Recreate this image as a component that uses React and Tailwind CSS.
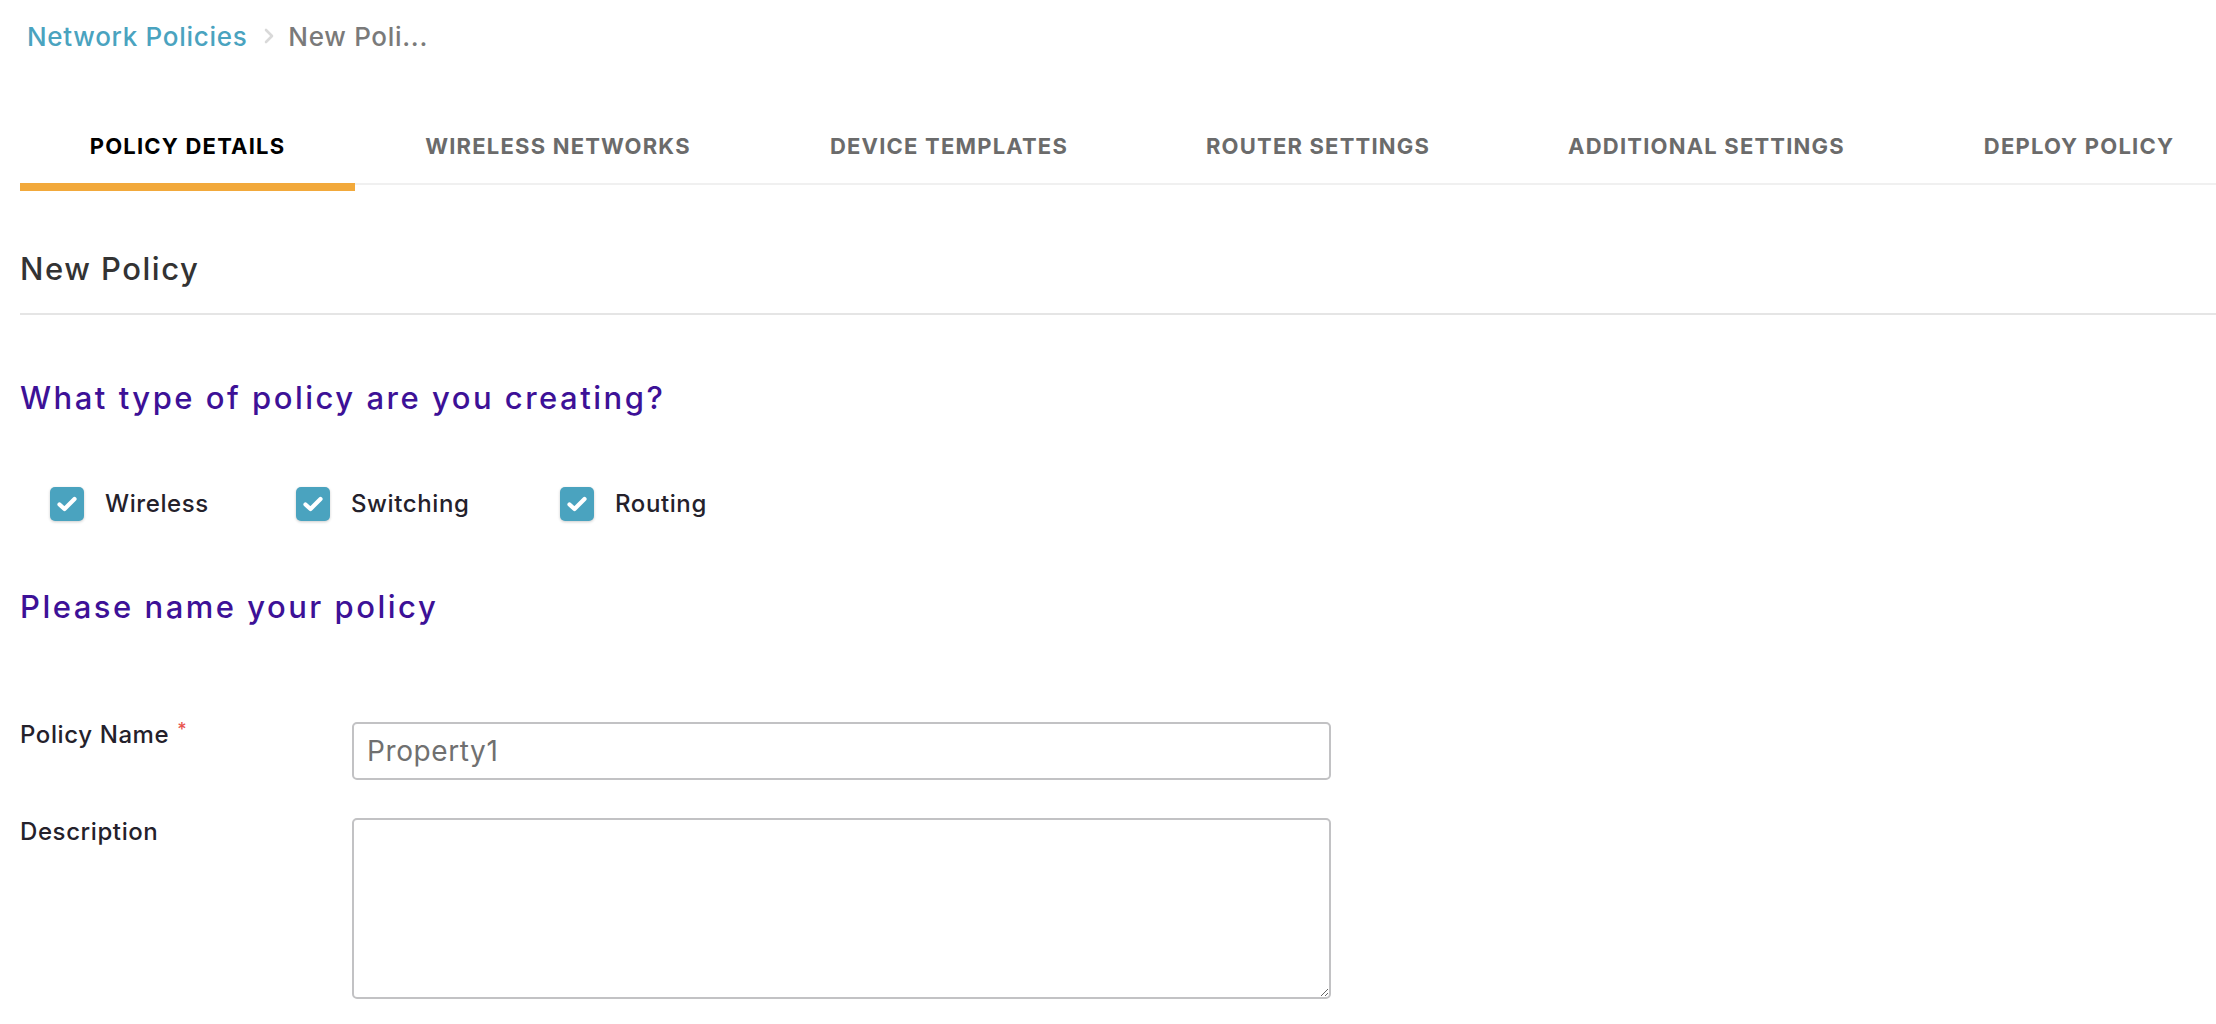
import React from "react";

const tabs = [
  { label: "POLICY DETAILS", w: "w-[335px]", active: true },
  { label: "WIRELESS NETWORKS", w: "w-[406px]" },
  { label: "DEVICE TEMPLATES", w: "w-[376px]" },
  { label: "ROUTER SETTINGS", w: "w-[362px]" },
  { label: "ADDITIONAL SETTINGS", w: "w-[415px]" },
  { label: "DEPLOY POLICY", w: "w-[330px]" },
];

function Check({ label, w }) {
  return (
    <div className={`flex items-center ${w} shrink-0`}>
      <span className="flex h-[34px] w-[34px] items-center justify-center rounded-[5px] bg-[#4aa3bf] shadow-[0_1px_3px_rgba(0,0,0,0.2)]">
        <svg width="22" height="18" viewBox="0 0 22 18" fill="none">
          <path d="M3.5 9.5 L8.5 14 L18.5 4" stroke="#ffffff" strokeWidth="4.2" strokeLinecap="round" strokeLinejoin="round" />
        </svg>
      </span>
      <span className="ml-[21px] text-[24px] leading-[32px] font-medium tracking-[0.6px] text-[#24212b]">{label}</span>
    </div>
  );
}

export default function App() {
  return (
    <div className="min-h-screen w-full bg-white pl-[20px] overflow-hidden" style={{ fontFamily: "Inter, 'Open Sans', sans-serif" }}>
      {/* breadcrumb */}
      <div className="flex h-[70px] items-center pl-[7px] pt-[2px] text-[26px] font-medium tracking-[0.7px]">
        <span className="text-[#4aa3bf]">Network Policies</span>
        <svg className="ml-[17px] mr-[14px]" width="10" height="16" viewBox="0 0 10 16" fill="none">
          <path d="M2 2 L8 8 L2 14" stroke="#d9d9d9" strokeWidth="2.6" strokeLinecap="round" strokeLinejoin="round" />
        </svg>
        <span className="text-[#7a7a7a]">New Poli...</span>
      </div>

      {/* tabs */}
      <div className="flex overflow-hidden">
        {tabs.map((t) => (
          <div key={t.label} className={`${t.w} shrink-0 flex flex-col`}>
            <div className={`flex h-[113px] items-center justify-center pt-[39px] text-[22px] font-bold tracking-[1.2px] whitespace-nowrap ${t.active ? "text-black" : "text-[#6b6b6b]"}`}>
              {t.label}
            </div>
            {t.active ? (
              <div className="h-[8px] bg-[#f2a93b]" />
            ) : (
              <div className="h-[8px] border-t-2 border-[#f0f0f0]" />
            )}
          </div>
        ))}
      </div>

      {/* title */}
      <div className="border-b-2 border-[#e5e5e5] pt-[58px] pb-[24px]">
        <h1 className="text-[31px] leading-[40px] font-medium tracking-[1.5px] text-[#333333]">New Policy</h1>
      </div>

      <h2 className="mt-[63px] text-[31px] leading-[40px] font-medium tracking-[2.5px] text-[#3d1197]">
        What type of policy are you creating?
      </h2>

      <div className="mt-[69px] flex pl-[30px]">
        <Check label="Wireless" w="w-[246px]" />
        <Check label="Switching" w="w-[264px]" />
        <Check label="Routing" w="w-[200px]" />
      </div>

      <h2 className="mt-[66px] text-[31px] leading-[40px] font-medium tracking-[2.5px] text-[#3d1197]">
        Please name your policy
      </h2>

      <div className="mt-[92px] flex items-start">
        <label className="w-[332px] shrink-0 text-[24px] leading-[32px] font-medium tracking-[0.6px] text-[#24212b]">
          Policy Name<span className="ml-[8px] align-top text-[18px] leading-[22px] text-[#e8554e]">*</span>
        </label>
        <input
          defaultValue="Property1"
          className="mt-[3px] h-[58px] w-[979px] rounded-[5px] border-2 border-[#c2c2c4] px-[13px] text-[28px] tracking-[0.6px] text-[#707070] outline-none"
        />
      </div>

      <div className="mt-[36px] flex items-start">
        <label className="w-[332px] shrink-0 text-[24px] leading-[32px] font-medium tracking-[0.6px] text-[#24212b]">
          Description
        </label>
        <textarea className="mt-[2px] h-[181px] w-[979px] rounded-[5px] border-2 border-[#c2c2c4] px-[13px] py-[8px] text-[24px] text-[#707070] outline-none" />
      </div>
    </div>
  );
}
